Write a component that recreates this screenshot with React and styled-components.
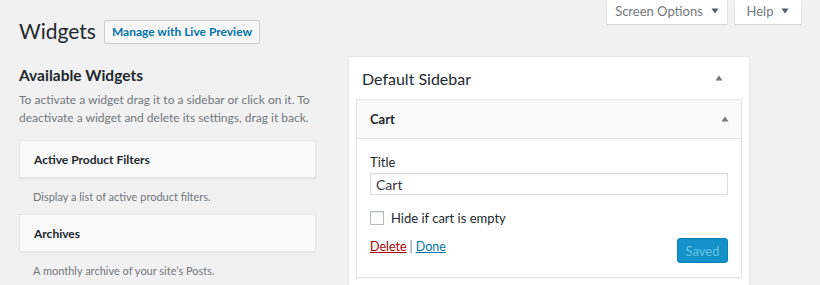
import styled, { createGlobalStyle } from "styled-components";

const GlobalStyle = createGlobalStyle`
  html, body {
    margin: 0;
    padding: 0;
    background: #f1f1f1;
  }
  body {
    font-family: Lato, "Noto Sans", sans-serif;
    color: #23282d;
    font-size: 13px;
  }
`;

function Triangle({ up = true, color = "#72777c" }) {
  return (
    <svg width="8" height="6" viewBox="0 0 8 6" aria-hidden="true">
      <path d={up ? "M0.5 5.5 L4 0.5 L7.5 5.5 Z" : "M0.5 0.5 L4 5.5 L7.5 0.5 Z"} fill={color} />
    </svg>
  );
}

export default function App() {
  return (
    <>
      <GlobalStyle />
      <Page>
        <Header>
          <TitleRow>
            <PageTitle>Widgets</PageTitle>
            <TitleAction>Manage with Live Preview</TitleAction>
          </TitleRow>
          <MetaLinks>
            <MetaTab $w={120}>
              Screen Options <Triangle up={false} color="#555d66" />
            </MetaTab>
            <MetaTab $w={66}>
              Help <Triangle up={false} color="#555d66" />
            </MetaTab>
          </MetaLinks>
        </Header>

        <Columns>
          <LeftCol>
            <SectionTitle>Available Widgets</SectionTitle>
            <Description>
              To activate a widget drag it to a sidebar or click on it. To
              <br />
              deactivate a widget and delete its settings, drag it back.
            </Description>
            <WidgetList>
              <WidgetItem>
                <WidgetBox>Active Product Filters</WidgetBox>
                <WidgetDesc>Display a list of active product filters.</WidgetDesc>
              </WidgetItem>
              <WidgetItem>
                <WidgetBox>Archives</WidgetBox>
                <WidgetDesc>A monthly archive of your site’s Posts.</WidgetDesc>
              </WidgetItem>
            </WidgetList>
          </LeftCol>

          <Sidebar>
            <SidebarHead>
              <SidebarTitle>Default Sidebar</SidebarTitle>
              <Triangle />
            </SidebarHead>
            <OpenWidget>
              <OpenWidgetHead>
                <span>Cart</span>
                <Triangle />
              </OpenWidgetHead>
              <OpenWidgetBody>
                <Label>Title</Label>
                <TextInput readOnly value="Cart" />
                <CheckRow>
                  <CheckBox />
                  <span>Hide if cart is empty</span>
                </CheckRow>
                <Actions>
                  <Links>
                    <Link $danger>Delete</Link>
                    <Sep>|</Sep>
                    <Link>Done</Link>
                  </Links>
                  <SaveButton disabled>Saved</SaveButton>
                </Actions>
              </OpenWidgetBody>
            </OpenWidget>
          </Sidebar>
        </Columns>
      </Page>
    </>
  );
}

const Page = styled.div`
  padding: 0 19px;
  width: 820px;
  box-sizing: border-box;
`;

const Header = styled.div`
  display: flex;
  justify-content: space-between;
  align-items: flex-start;
`;

const TitleRow = styled.div`
  display: flex;
  align-items: center;
  gap: 8px;
  padding-top: 18px;
`;

const PageTitle = styled.h1`
  margin: 0;
  font-size: 21px;
  font-weight: 400;
  line-height: 26px;
  color: #23282d;
`;

const TitleAction = styled.button`
  height: 24px;
  padding: 0 7px;
  border: 1px solid #ccc;
  border-radius: 2px;
  background: #f7f7f7;
  color: #0073aa;
  font-family: inherit;
  font-size: 12px;
  font-weight: 700;
  box-sizing: border-box;
  margin-top: 1px;
`;

const MetaLinks = styled.div`
  display: flex;
  gap: 8px;
`;

const MetaTab = styled.div`
  width: ${(p) => p.$w}px;
  height: 24px;
  background: #fff;
  box-shadow: 0 0 0 1px rgba(0, 0, 0, 0.05), 0 1px 1px rgba(0, 0, 0, 0.06);
  display: flex;
  align-items: center;
  justify-content: center;
  gap: 8px;
  color: #72777c;
  font-size: 13px;
  padding-bottom: 2px;
  box-sizing: border-box;
`;

const Columns = styled.div`
  display: flex;
  align-items: flex-start;
  gap: 32px;
  margin-top: 12px;
`;

const LeftCol = styled.div`
  width: 297px;
`;

const SectionTitle = styled.h2`
  margin: 9px 0 0;
  font-size: 15.5px;
  font-weight: 700;
  line-height: 20px;
  color: #23282d;
`;

const Description = styled.p`
  margin: 6px 0 0;
  font-size: 12px;
  line-height: 18px;
  color: #72777c;
  white-space: nowrap;
`;

const WidgetList = styled.div`
  margin-top: 13px;
`;

const WidgetItem = styled.div``;

const WidgetBox = styled.div`
  height: 38px;
  display: flex;
  align-items: center;
  padding: 0 14px;
  background: #fafafa;
  border: 1px solid #e5e5e5;
  box-shadow: 0 1px 1px rgba(0, 0, 0, 0.04);
  box-sizing: border-box;
  font-size: 12px;
  font-weight: 700;
  color: #23282d;
`;

const WidgetDesc = styled.div`
  padding: 10px 14px 8px;
  font-size: 11px;
  line-height: 18px;
  color: #72777c;
`;

const Sidebar = styled.div`
  width: 402px;
  height: 240px;
  background: #fff;
  border: 1px solid #e5e5e5;
  box-shadow: 0 1px 1px rgba(0, 0, 0, 0.04);
  box-sizing: border-box;
  padding: 0 7px;
`;

const SidebarHead = styled.div`
  height: 42px;
  display: flex;
  align-items: center;
  justify-content: space-between;
  padding: 0 19px 0 6px;
`;

const SidebarTitle = styled.h3`
  margin: 0;
  font-size: 16px;
  font-weight: 400;
  color: #23282d;
`;

const OpenWidget = styled.div`
  border: 1px solid #e5e5e5;
  box-shadow: 0 1px 1px rgba(0, 0, 0, 0.04);
`;

const OpenWidgetHead = styled.div`
  height: 38px;
  display: flex;
  align-items: center;
  justify-content: space-between;
  padding: 0 12px 0 13px;
  background: #fafafa;
  border-bottom: 1px solid #e5e5e5;
  font-size: 13px;
  font-weight: 700;
  color: #23282d;
`;

const OpenWidgetBody = styled.div`
  padding: 14px 13px;
  background: #fff;
`;

const Label = styled.div`
  font-size: 13px;
  line-height: 18px;
  color: #23282d;
`;

const TextInput = styled.input`
  display: block;
  width: 100%;
  height: 22px;
  margin-top: 2px;
  padding: 0 5px;
  box-sizing: border-box;
  border: 1px solid #ddd;
  box-shadow: inset 0 1px 2px rgba(0, 0, 0, 0.07);
  font-family: inherit;
  font-size: 14px;
  color: #32373c;
  outline: none;
`;

const CheckRow = styled.div`
  display: flex;
  align-items: center;
  gap: 7px;
  margin-top: 15px;
  height: 16px;
  font-size: 13px;
  color: #23282d;
`;

const CheckBox = styled.span`
  width: 14px;
  height: 14px;
  border: 1px solid #b4b9be;
  background: #fff;
  box-shadow: inset 0 1px 2px rgba(0, 0, 0, 0.1);
  box-sizing: border-box;
`;

const Actions = styled.div`
  display: flex;
  justify-content: space-between;
  align-items: flex-start;
  margin-top: 12px;
`;

const Links = styled.div`
  display: flex;
  gap: 3px;
  line-height: 18px;
  font-size: 12.5px;
`;

const Link = styled.a`
  color: ${(p) => (p.$danger ? "#a00" : "#0073aa")};
  text-decoration: underline;
  cursor: pointer;
`;

const Sep = styled.span`
  color: #72777c;
`;

const SaveButton = styled.button`
  width: 51px;
  height: 25px;
  border: 1px solid #0a81b4;
  border-radius: 3px;
  background: #1491c6;
  color: #66c6e4;
  font-family: inherit;
  font-size: 13px;
  padding: 0;
`;
